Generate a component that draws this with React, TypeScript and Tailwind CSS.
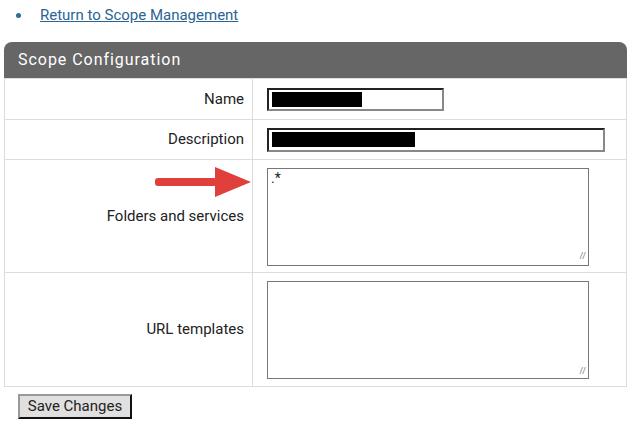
export default function App() {
  const font = { fontFamily: 'Roboto, "Liberation Sans", sans-serif' };
  return (
    <div className="w-[639px] h-[439px] bg-white text-[15px] text-[#222]" style={font}>
      <ul className="pl-[32px] pt-[4px] h-[42px] list-disc marker:text-[#2a6f97]">
        <li className="pl-[8px]">
          <a href="#" className="text-[#2a6496] underline">Return to Scope Management</a>
        </li>
      </ul>
      <div className="ml-[4px] w-[623px]">
        <div className="h-[36px] bg-[#666] rounded-t-[8px] flex items-center pl-[14px] text-white text-[16px] tracking-[0.06em]">
          Scope Configuration
        </div>
        <div className="border border-[#dcdcdc] grid grid-cols-[248px_1fr]">
          <div className="h-[41px] border-r border-b border-[#dcdcdc] flex items-center justify-end pr-[8px]">Name</div>
          <div className="h-[41px] border-b border-[#dcdcdc] flex items-center pl-[14px]">
            <div className="w-[177px] h-[23px] border-2 border-[#222] border-r-[#888] border-b-[#888] flex items-center px-[3px]">
              <div className="w-[90px] h-[15px] bg-black" />
            </div>
          </div>
          <div className="h-[40px] border-r border-b border-[#dcdcdc] flex items-center justify-end pr-[8px]">Description</div>
          <div className="h-[40px] border-b border-[#dcdcdc] flex items-center pl-[14px]">
            <div className="w-[338px] h-[24px] border-2 border-[#222] border-r-[#888] border-b-[#888] flex items-center px-[3px]">
              <div className="w-[143px] h-[15px] bg-black" />
            </div>
          </div>
          <div className="h-[113px] border-r border-b border-[#dcdcdc] flex items-center justify-end pr-[8px] relative">
            Folders and services
            <svg className="absolute left-[148px] top-[5px]" width="100" height="32" viewBox="0 0 100 32">
              <rect x="2" y="13" width="62" height="8" rx="3" fill="#e0403c" />
              <polygon points="62,2 98,17 62,32" fill="#e0403c" />
            </svg>
          </div>
          <div className="h-[113px] border-b border-[#dcdcdc] pl-[14px] pt-[8px]">
            <div className="relative w-[322px] h-[98px] border border-[#777] text-[14px] pl-[3px] leading-[18px]">
              .*
              <span className="absolute right-[2px] bottom-[0px] text-[9px] text-[#777]">//</span>
            </div>
          </div>
          <div className="h-[113px] border-r border-[#dcdcdc] flex items-center justify-end pr-[8px]">URL templates</div>
          <div className="h-[113px] pl-[14px] pt-[8px]">
            <div className="relative w-[322px] h-[98px] border border-[#777]">
              <span className="absolute right-[2px] bottom-[0px] text-[9px] text-[#777]">//</span>
            </div>
          </div>
        </div>
      </div>
      <button className="ml-[18px] mt-[7px] w-[114px] h-[25px] bg-[#e0e0e0] border-2 border-[#111] border-t-[#999] border-l-[#999] text-[15px] leading-none">
        Save Changes
      </button>
    </div>
  );
}
